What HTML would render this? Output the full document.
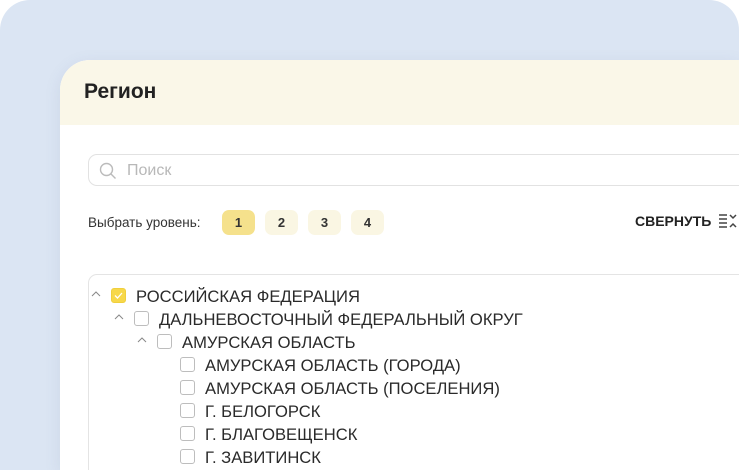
<html style="overflow:hidden"><head><style>
html,body{margin:0;width:739px;height:470px;overflow:hidden}
body{background:#fff;font-family:"Liberation Sans",sans-serif;position:relative}
.bg{position:absolute;left:0;top:0;width:739px;height:470px;background:#dbe5f3;border-radius:30px 30px 0 0}
.card{position:absolute;left:60px;top:60px;width:679px;height:410px;background:#fff;border-radius:30px 0 0 0;overflow:hidden;box-shadow:0 4px 16px rgba(90,110,150,.12)}
.hd{height:65px;background:#faf7e8;}
.hd span{position:absolute;left:24px;top:20px;font-size:21px;font-weight:bold;color:#222}
.search{position:absolute;left:28px;top:94px;width:700px;height:32px;border:1px solid #e2e2e2;border-radius:9px;box-sizing:border-box}
.search span{position:absolute;left:38px;top:7px;font-size:16px;color:#b8b8b8}
.lvl{position:absolute;top:155px;font-size:13.5px;color:#333}
.b{position:absolute;top:150px;width:33px;height:25px;border-radius:7px;background:#faf6e3;font-size:13px;font-weight:bold;text-align:center;line-height:25px;color:#333}
.tree{position:absolute;left:28px;top:214px;width:720px;height:250px;border:1px solid #e4e4e4;border-radius:9px}
.r{position:absolute;font-size:16.6px;color:#2a2a2a;white-space:nowrap}
.cb{position:absolute;width:13px;height:13px;border:1px solid #bdbdbd;border-radius:3px;background:#fff}
.ar{position:absolute}
</style></head><body>
<div class="bg"></div>
<div class="card">
<div class="hd"><span>Регион</span></div>
<div class="search"><svg style="position:absolute;left:10px;top:7px" width="18" height="18" viewBox="0 0 18 18"><circle cx="7.5" cy="7.5" r="6" fill="none" stroke="#bbb" stroke-width="1.4"/><path d="M12 12l4.5 4.5" stroke="#bbb" stroke-width="1.4"/></svg><span>Поиск</span></div>
<div class="lvl" style="left:28px">Выбрать уровень:</div>
<div class="b" style="left:162px;background:#f5e18c">1</div>
<div class="b" style="left:205px">2</div>
<div class="b" style="left:248px">3</div>
<div class="b" style="left:291px">4</div>
<div style="position:absolute;left:575px;top:153px;font-size:14px;font-weight:bold;color:#222">СВЕРНУТЬ</div>
<svg style="position:absolute;left:658px;top:153px" width="20" height="16" viewBox="0 0 20 16"><path d="M1 2h8M1 6h8M1 10h8M1 14h8" stroke="#444" stroke-width="1.6"/><path d="M12 2l3 3 3-3M12 14l3-3 3 3" stroke="#444" stroke-width="1.5" fill="none"/></svg>
<div class="tree"></div>
</div>
<svg class="ar" style="left:91px;top:291px" width="10" height="6"><path d="M1 5l4-4 4 4" stroke="#888" fill="none"/></svg>
<div class="cb" style="left:111px;top:288px;background:#f7d84a;border-color:#f0cf3c"><svg width="13" height="13" viewBox="0 0 13 13"><path d="M3 6.5l2.5 2.5 4.5-5" stroke="#fff" stroke-width="1.3" fill="none"/></svg></div>
<div class="r" style="left:136px;top:287px">РОССИЙСКАЯ ФЕДЕРАЦИЯ</div>
<svg class="ar" style="left:114px;top:314px" width="10" height="6"><path d="M1 5l4-4 4 4" stroke="#888" fill="none"/></svg><div class="cb" style="left:134px;top:311px"></div>
<div class="r" style="left:159px;top:310px">ДАЛЬНЕВОСТОЧНЫЙ ФЕДЕРАЛЬНЫЙ ОКРУГ</div>
<svg class="ar" style="left:137px;top:337px" width="10" height="6"><path d="M1 5l4-4 4 4" stroke="#888" fill="none"/></svg><div class="cb" style="left:157px;top:334px"></div>
<div class="r" style="left:182px;top:333px">АМУРСКАЯ ОБЛАСТЬ</div>
<div class="cb" style="left:180px;top:357px"></div><div class="r" style="left:205px;top:356px">АМУРСКАЯ ОБЛАСТЬ (ГОРОДА)</div>
<div class="cb" style="left:180px;top:380px"></div><div class="r" style="left:205px;top:379px">АМУРСКАЯ ОБЛАСТЬ (ПОСЕЛЕНИЯ)</div>
<div class="cb" style="left:180px;top:403px"></div><div class="r" style="left:205px;top:402px">Г. БЕЛОГОРСК</div>
<div class="cb" style="left:180px;top:426px"></div><div class="r" style="left:205px;top:425px">Г. БЛАГОВЕЩЕНСК</div>
<div class="cb" style="left:180px;top:449px"></div><div class="r" style="left:205px;top:448px">Г. ЗАВИТИНСК</div>
</body></html>
